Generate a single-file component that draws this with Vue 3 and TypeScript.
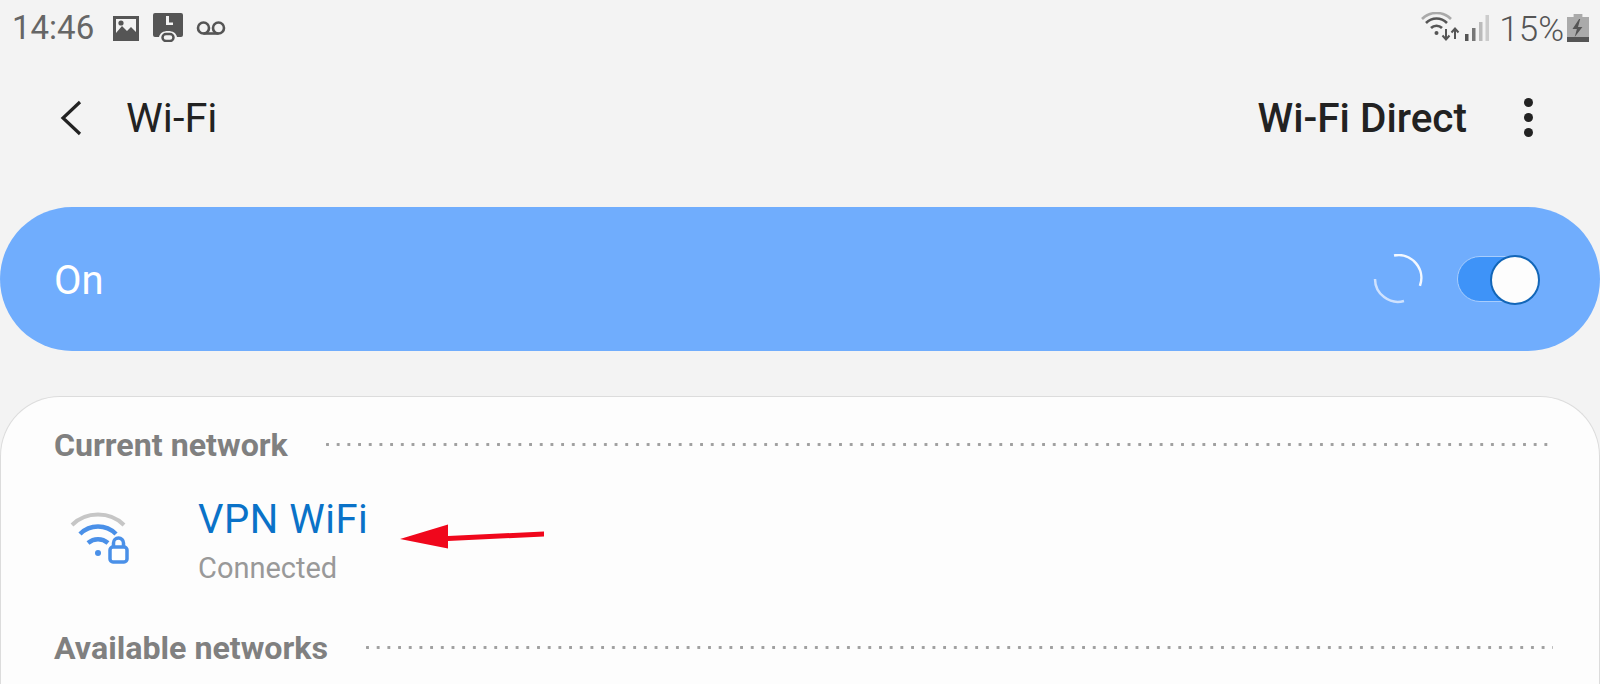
<script setup lang="ts">
const title = "Wi-Fi";
</script>

<template>
  <div class="page">
    <div class="status">
      <div class="status-left">
        <span class="time">14:46</span>
        <svg class="ic-image" width="28" height="26" viewBox="0 0 28 26">
          <path fill="#555" fill-rule="evenodd" d="M1 1h26v25H1zM4 4v14l6-7 5 5 4-4 5 5V4z" />
          <circle cx="9" cy="8" r="2.6" fill="#555" />
        </svg>
        <svg class="ic-vm" width="30" height="29" viewBox="0 0 30 29">
          <path fill="#555" fill-rule="evenodd" d="M2 0h26a2 2 0 0 1 2 2v20a2 2 0 0 1-2 2h-4c-1-4-4-6-9-6s-8 2-9 6H2a2 2 0 0 1-2-2V2a2 2 0 0 1 2-2zM13 3v9h7V9.500h-4V3z" />
          <rect x="9.500" y="21" width="11" height="7" rx="3.500" fill="none" stroke="#555" stroke-width="2.500" />
        </svg>
        <svg class="ic-oo" width="30" height="16" viewBox="0 0 30 16">
          <circle cx="7.500" cy="8" r="5.500" fill="none" stroke="#555" stroke-width="2.600" />
          <circle cx="22.500" cy="8" r="5.500" fill="none" stroke="#555" stroke-width="2.600" />
          <path d="M7.500 13.500h15" stroke="#555" stroke-width="2.600" />
        </svg>
      </div>
      <div class="status-right">
        <svg class="ic-wifi" width="42" height="30" viewBox="0 0 42 30">
          <path d="M1 7C9-1 22-1 30 7" fill="none" stroke="#aaa" stroke-width="2.600" />
          <path d="M5 11C11 5 20 5 26 11" fill="none" stroke="#555" stroke-width="2.600" />
          <path d="M10 16c3-3 8-3 11 0" fill="none" stroke="#555" stroke-width="2.600" />
          <circle cx="15.500" cy="21" r="2" fill="#555" />
          <path d="M25 17v10m-3.500-3.500 3.500 4 3.500-4M34 27V17m-3.500 3.500 3.500-4 3.500 4" fill="none" stroke="#555" stroke-width="2" />
        </svg>
        <svg class="ic-sig" width="24" height="26" viewBox="0 0 24 26">
          <rect x="0" y="19" width="3.500" height="7" fill="#555" />
          <rect x="7" y="13" width="3.500" height="13" fill="#777" />
          <rect x="14" y="7" width="3.500" height="19" fill="#bbb" />
          <rect x="20.500" y="0" width="3.500" height="26" fill="#ccc" />
        </svg>
        <span class="pct">15%</span>
        <svg class="ic-bat" width="22" height="28" viewBox="0 0 20 28" preserveAspectRatio="none">
          <path fill="#aaa" d="M6 0h8v3h6v25H0V3h6z" />
          <rect x="0" y="23" width="20" height="5" fill="#555" />
          <path fill="#555" d="M11 5 5 15h4l-2 8 7-10h-4l2-8z" />
        </svg>
      </div>
    </div>

    <header class="bar">
      <svg class="back" width="24" height="36" viewBox="0 0 24 36">
        <path d="M21 2 4 18l17 16" fill="none" stroke="#222" stroke-width="3.200" />
      </svg>
      <span class="title">{{ title }}</span>
      <span class="spacer"></span>
      <span class="direct">Wi-Fi Direct</span>
      <span class="more"><i></i><i></i><i></i></span>
    </header>

    <section class="master">
      <span class="on">On</span>
      <span class="spacer"></span>
      <svg class="spin" width="50" height="50" viewBox="0 0 50 50">
        <path d="M17 2.500A23 23 0 0 1 47.800 28" fill="none" stroke="#f3f8ff" stroke-width="2.500" transform="rotate(10 25 25)" />
        <path d="M2 25A23 23 0 0 0 31 47" fill="none" stroke="#cfe2fe" stroke-width="2.500" />
      </svg>
      <div class="toggle"><div class="knob"></div></div>
    </section>

    <main class="card">
      <div class="head">
        <span>Current network</span>
        <i class="dots"></i>
      </div>
      <div class="net">
        <svg class="wifi" width="60" height="54" viewBox="0 0 60 54">
          <path d="M3 13C17-1 41-1 55 13" fill="none" stroke="#c6c6c6" stroke-width="4" />
          <path d="M11 22C21 12 37 12 47 22" fill="none" stroke="#4a90e8" stroke-width="4.500" />
          <path d="M19 31c6-5 14-5 20 0" fill="none" stroke="#4a90e8" stroke-width="4.500" />
          <circle cx="29" cy="41" r="3" fill="#4a90e8" />
          <rect x="41" y="35" width="17" height="15" rx="3" fill="#fff" stroke="#4a90e8" stroke-width="3.500" />
          <path d="M44.500 35v-4a5 5 0 0 1 10 0v4" fill="none" stroke="#4a90e8" stroke-width="3.500" />
        </svg>
        <div class="net-text">
          <div class="name">VPN WiFi</div>
          <div class="state">Connected</div>
        </div>
      </div>
      <div class="head head-2">
        <span>Available networks</span>
        <i class="dots"></i>
      </div>
    </main>

    <svg class="arrow" width="150" height="30" viewBox="0 0 150 30">
      <path fill="#f0071c" d="M0 15 48 0.500V12L144 7.500V12.500L48 17V24.500z" />
    </svg>
  </div>
</template>

<style>
html, body { margin: 0; padding: 0; background: #f3f3f3; }
</style>

<style scoped>
.page {
  position: relative;
  width: 1600px;
  height: 684px;
  overflow: hidden;
  background: #f3f3f3;
  font-family: Roboto, "Noto Sans", sans-serif;
  display: flex;
  flex-direction: column;
}
.status {
  height: 55px;
  padding: 0 11px 0 12px;
  display: flex;
  justify-content: space-between;
  align-items: center;
  box-sizing: border-box;
}
.status-left, .status-right { display: flex; align-items: center; }
.time { font-size: 33px; font-weight: 400; color: #666; width: 100px; }
.ic-vm { margin-left: 13px; }
.ic-oo { margin-left: 13px; }
.ic-wifi { margin-top: -2px; }
.ic-sig { margin-left: 2px; }
.pct { font-size: 35px; font-weight: 300; color: #555; margin-left: 10px; position: relative; top: 2px; }
.ic-bat { margin-left: 3px; }
.bar {
  height: 63px;
  padding: 0 67px 0 59px;
  margin-top: 31px;
  display: flex;
  align-items: center;
  color: #222;
}
.back { margin-right: 43px; }
.title { font-size: 41.500px; }
.spacer { flex: 1; }
.direct { font-size: 40.500px; font-weight: 500; }
.more { display: flex; flex-direction: column; gap: 6px; margin-left: 57px; }
.more i { width: 9px; height: 9px; border-radius: 50%; background: #222; display: block; }
.master {
  height: 144px;
  margin-top: 58px;
  border-radius: 72px;
  background: #70adfd;
  padding: 0 61px 0 54px;
  display: flex;
  align-items: center;
}
.on { font-size: 40px; color: #fff; position: relative; top: 1px; }
.spin { margin-right: 34px; }
.toggle {
  width: 82px;
  height: 46px;
  box-sizing: border-box;
  border: 1.500px solid #a8cdfd;
  border-radius: 23px;
  background: #3e93f8;
  position: relative;
}
.knob {
  position: absolute;
  right: -1.500px;
  top: -2px;
  width: 50px;
  height: 50px;
  box-sizing: border-box;
  border-radius: 50%;
  background: #fdfdfd;
  border: 2px solid #1266b8;
}
.card {
  flex: 1;
  margin-top: 45px;
  background: #fdfdfd;
  border: 1px solid #dcdcdc;
  border-bottom: none;
  border-radius: 60px 60px 0 0;
  padding: 30px 46px 0 53px;
}
.head {
  display: flex;
  align-items: center;
  gap: 38px;
  font-size: 32.200px;
  font-weight: 700;
  color: #808080;
  height: 36px;
}
.dots {
  flex: 1;
  height: 3px;
  margin-top: -2px;
  background-image: radial-gradient(circle at 1.500px 1.500px, #a0a0a0 1.400px, transparent 1.600px);
  background-size: 10.700px 3px;
  background-repeat: repeat-x;
}
.net {
  display: flex;
  align-items: flex-start;
  margin-top: 26px;
  height: 139px;
}
.wifi { margin: 23px 0 0 15px; }
.net-text { margin-left: 69px; padding-top: 6px; }
.name { font-size: 40px; color: #0a72c8; line-height: 50px; letter-spacing: 0.500px; }
.state { font-size: 29px; color: #999; line-height: 40px; margin-top: 3px; }
.head-2 { margin-top: 2px; }
.arrow { position: absolute; left: 400px; top: 524px; }
</style>
